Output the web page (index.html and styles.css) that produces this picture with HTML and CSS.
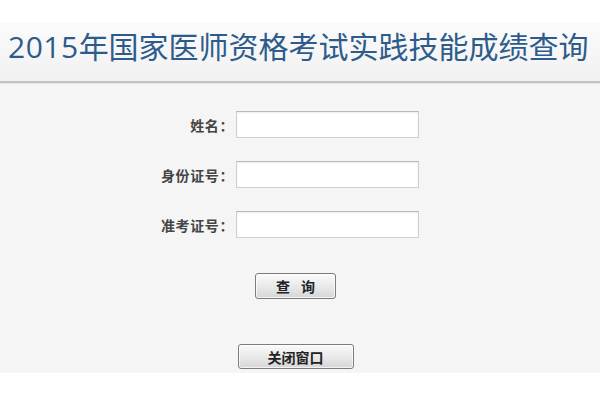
FILE: index.html
```html
<!DOCTYPE html>
<html>

<head>
  <meta charset="UTF-8">
  <title>2015年国家医师资格考试实践技能成绩查询</title>
  <link rel="stylesheet" href="styles.css">
</head>

<body>
  <div class="top-gap"></div>
  <div class="header">
    <h1 class="title"><span class="year">2015</span>年国家医师资格考试实践技能成绩查询</h1>
  </div>

  <div class="main">
    <form class="query-form">
      <div class="form-row">
        <label for="name">姓名：</label>
        <input type="text" id="name">
      </div>
      <div class="form-row">
        <label for="idcard">身份证号：</label>
        <input type="text" id="idcard">
      </div>
      <div class="form-row">
        <label for="ticket">准考证号：</label>
        <input type="text" id="ticket">
      </div>
    </form>

    <div class="actions">
      <button type="button" class="btn btn-query">查 询</button>
      <button type="button" class="btn btn-close">关闭窗口</button>
    </div>
  </div>
</body>

</html>
```

FILE: styles.css
```css
* {
  margin: 0;
  padding: 0;
  box-sizing: border-box;
}

body {
  font-family: "Noto Sans CJK SC", "Liberation Sans", sans-serif;
  background: white;
  color: #333;
}

.top-gap {
  height: 23px;
}

/* 标题栏 */
.header {
  height: 60px;
  padding: 1px 0 0 8px;
  background: linear-gradient(#fbfbfb, #f1f1f1);
  border-bottom: 2px solid #c2c2c2;
}

.title {
  font-size: 30px;
  font-weight: normal;
  line-height: 42px;
  color: #2d5c8c;
  white-space: nowrap;
}

.title .year {
  font-family: "Open Sans", "Liberation Sans", sans-serif;
  letter-spacing: 0.5px;
}

/* 查询表单 */
.main {
  background: #f5f5f5;
  border-top: 1px solid #e6e6e6;
  padding: 27px 0 4px;
}

.query-form {
  display: flex;
  flex-direction: column;
  gap: 23px;
  margin-left: 148px;
}

.form-row {
  display: flex;
  align-items: center;
}

.form-row label {
  width: 88px;
  padding-right: 2px;
  text-align: right;
  font-size: 14px;
  font-weight: bold;
  letter-spacing: 0.6px;
  color: #444;
}

.form-row input {
  width: 183px;
  height: 27px;
  border: 1px solid #cfcfcf;
  border-top-color: #b9b9b9;
  background: white;
  box-shadow: inset 0 1px 2px rgba(0, 0, 0, 0.08);
}

/* 按钮 */
.actions {
  display: flex;
  flex-direction: column;
  align-items: center;
  padding-right: 9px;
  margin-top: 35px;
}

.btn {
  font-family: "Noto Sans CJK SC", sans-serif;
  font-size: 14px;
  font-weight: bold;
  color: #222;
  border: 1px solid #7c7c7c;
  border-radius: 3px;
  background: linear-gradient(#fbfbfb, #e6e6e6 60%, #d6d6d6);
  box-shadow: inset 0 0 0 1px rgba(255, 255, 255, 0.7);
  cursor: pointer;
}

.btn-query {
  width: 81px;
  height: 26px;
  letter-spacing: 4px;
  text-indent: 4px;
}

.btn-close {
  width: 116px;
  height: 25px;
  margin-top: 45px;
}
```
